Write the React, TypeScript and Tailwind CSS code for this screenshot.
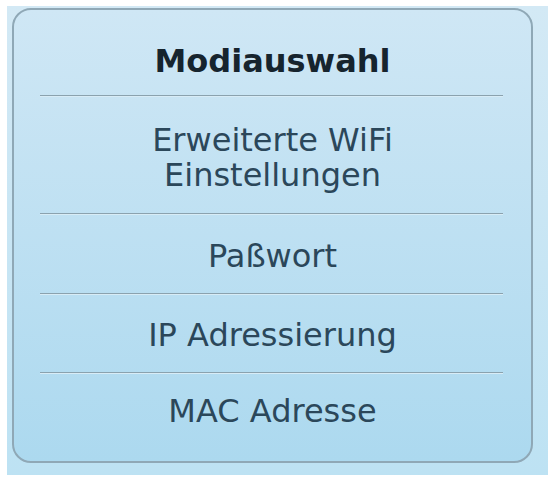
const items = [
  { label: "Erweiterte WiFi", sub: "Einstellungen", h: "h-[116px]", pt: "pt-[26px]" },
  { label: "Paßwort", h: "h-[78px]", pt: "pt-[24px]" },
  { label: "IP Adressierung", h: "h-[77px]", pt: "pt-[23px]" },
  { label: "MAC Adresse", h: "flex-1", pt: "pt-[20px]" },
]

function Divider() {
  return (
    <div className="mx-[26px] mr-[28px] h-[2px] border-t border-t-[#8ba2ae] border-b border-b-[#d8ecf6]" />
  )
}

export default function App() {
  return (
    <div className="w-[548px] h-[481px] bg-white overflow-hidden" style={{ fontFamily: '"DejaVu Sans", Verdana, sans-serif' }}>
      <div className="ml-[7px] mt-[6px] h-[469px] bg-gradient-to-b from-[#d3e9f5] to-[#bde2f3] pt-[2px] pl-[5px]">
        <div className="w-[521px] h-[455px] rounded-[19px] border-2 border-[#8fa8b6] bg-gradient-to-b from-[#cfe7f5] to-[#acd9ef] flex flex-col text-center">
          <div className="h-[85px] pt-[33px] text-[32px] leading-[36px] font-bold text-[#16242e]">
            Modiauswahl
          </div>
          {items.map((it) => (
            <div key={it.label} className="flex flex-col">
              <Divider />
              <div className={`${it.h} ${it.pt} text-[32px] leading-[35px] text-[#2b475a]`}>
                <div>{it.label}</div>
                {it.sub && <div>{it.sub}</div>}
              </div>
            </div>
          ))}
        </div>
      </div>
    </div>
  )
}
